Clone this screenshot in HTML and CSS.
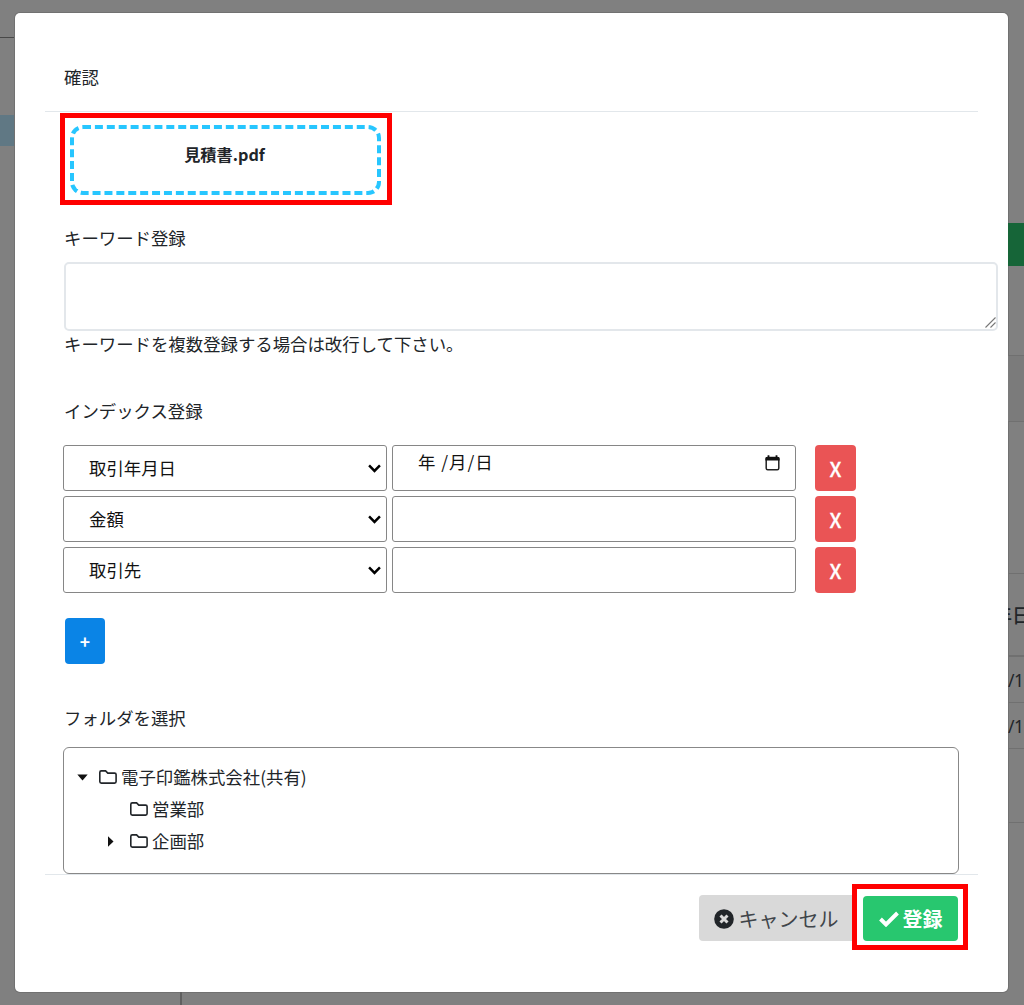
FILE: index.html
```
<!DOCTYPE html>
<html lang="ja">
<head>
<meta charset="utf-8">
<title>確認</title>
<link rel="stylesheet" href="styles.css">
</head>
<body>
<div class="page">
  <aside class="side-left"><div class="left-head"></div><div class="left-active"></div></aside>
  <main class="modal">
    <header class="modal-header">確認</header>
    <section class="modal-body">
      <div class="highlight file-highlight"><div class="file-name">見積書.pdf</div></div>
      <label class="label keyword-label">キーワード登録</label>
      <div class="textarea">
        <svg width="13" height="13" viewBox="0 0 13 13"><path d="M1.5 11.5 11.5 1.5M6.5 11.5l5-5" stroke="#777" stroke-width="1.1" fill="none"/></svg>
      </div>
      <p class="label help">キーワードを複数登録する場合は改行して下さい。</p>
      <div class="label index-label">インデックス登録</div>
      <div class="rows">
        <div class="row">
          <div class="select"><span>取引年月日</span><svg class="chev" viewBox="0 0 12 8"><path d="M1 1.2 6 6.2 11 1.2"/></svg></div>
          <div class="input"><span class="date">年 /月/日</span><svg class="cal" viewBox="0 0 15 16"><rect x="1.2" y="2.5" width="12.6" height="12.3" rx="1.5"/><path class="fill" d="M2.6.3h1.8V2h6.2V.3h1.8V2h.8q1.4 0 1.4 1.4V5.5H.4V3.4Q.4 2 1.8 2h.8z"/></svg></div>
          <button class="btn del">X</button>
        </div>
        <div class="row">
          <div class="select"><span>金額</span><svg class="chev" viewBox="0 0 12 8"><path d="M1 1.2 6 6.2 11 1.2"/></svg></div>
          <div class="input"></div>
          <button class="btn del">X</button>
        </div>
        <div class="row">
          <div class="select"><span>取引先</span><svg class="chev" viewBox="0 0 12 8"><path d="M1 1.2 6 6.2 11 1.2"/></svg></div>
          <div class="input"></div>
          <button class="btn del">X</button>
        </div>
      </div>
      <button class="btn add">+</button>
      <div class="label folder-label">フォルダを選択</div>
      <div class="tree">
        <div class="node"><svg class="arrow" viewBox="0 0 11 11"><path d="M.3 2.5h10.4L5.5 8.5z"/></svg><svg class="folder" viewBox="0 0 18 14"><path d="M2.3.9h4.3l2.2 2.2h6.8q1.5 0 1.5 1.5v7q0 1.5-1.5 1.5H2.3Q.8 13.1.8 11.6V2.4Q.8.9 2.3.9z"/></svg><span>電子印鑑株式会社(共有)</span></div>
        <div class="node child"><span class="arrow"></span><svg class="folder" viewBox="0 0 18 14"><path d="M2.3.9h4.3l2.2 2.2h6.8q1.5 0 1.5 1.5v7q0 1.5-1.5 1.5H2.3Q.8 13.1.8 11.6V2.4Q.8.9 2.3.9z"/></svg><span>営業部</span></div>
        <div class="node child"><svg class="arrow" viewBox="0 0 11 11"><path d="M3 .3v10.4L8.5 5.5z"/></svg><svg class="folder" viewBox="0 0 18 14"><path d="M2.3.9h4.3l2.2 2.2h6.8q1.5 0 1.5 1.5v7q0 1.5-1.5 1.5H2.3Q.8 13.1.8 11.6V2.4Q.8.9 2.3.9z"/></svg><span>企画部</span></div>
      </div>
    </section>
    <footer class="modal-footer">
      <button class="btn cancel"><svg width="20" height="20" viewBox="0 0 20 20"><circle cx="10" cy="10" r="9.8" fill="#212529"/><path d="m6.5 6.5 7 7m0-7-7 7" stroke="#d9d9d9" stroke-width="3"/></svg><span>キャンセル</span></button>
      <div class="highlight ok-highlight"><button class="btn ok"><svg width="20" height="16" viewBox="0 0 20 16"><path d="m1.5 8 5.5 5.5L18.5 2" fill="none" stroke="#fff" stroke-width="3.9"/></svg><span>登録</span></button></div>
    </footer>
  </main>
  <aside class="side-right">
    <div class="r-top"></div><div class="r-green"></div><div class="r-gap"></div><div class="r-band"></div><div class="r-space"></div>
    <div class="r-cell r-th"><span>年日</span></div><div class="r-cell"><span>/1</span></div><div class="r-cell"><span>/1</span></div><div class="r-last"></div>
  </aside>
  <div class="below"></div>
</div>
</body>
</html>
```
FILE: styles.css
```
* { box-sizing: border-box; }
body { margin: 0; background: #808080; color: #212529; font: 17.4px/26px "Noto Sans CJK JP", sans-serif; }
.page { display: grid; grid-template-columns: 15px 993px 16px; grid-template-rows: 992px 13px; height: 1005px; overflow: hidden; }
.below { grid-column: 2; width: 167px; border-right: 2px solid #606060; }
.side-left { padding-top: 37px; }
.left-head { height: 78px; border-top: 1px solid #484848; }
.left-active { height: 31px; background: #607884; }
.side-right { overflow: hidden; }
.r-top { height: 223px; }
.r-green { height: 43px; background: #166538; }
.r-gap { height: 89px; }
.r-band { height: 67px; background: #7b7b7b; border: solid #707070; border-width: 1px 0; }
.r-space { height: 151px; }
.r-cell { height: 46px; border-top: 1px solid #707070; display: flex; align-items: center; font: 17.5px/26px "Noto Sans", "Noto Sans CJK JP", sans-serif; letter-spacing: -.5px; }
.r-th { height: 83px; border-bottom: 1px solid #707070; padding: 3px 0 0; font-weight: 500; font-size: 19px; letter-spacing: 0; }
.r-th span { margin-left: -15px; white-space: nowrap; }
.r-last { height: 75px; border: solid #707070; border-width: 1px 0; }
.modal { margin-top: 13px; background: #fff; border-radius: 5px; padding: 0 30px; box-shadow: 0 0 0 1px #717171; display: flex; flex-direction: column; }
.modal-header { height: 99px; flex: none; padding: 51px 20px 0 19px; border-bottom: 1px solid #e2e7eb; }
.modal-body { height: 762px; flex: none; padding-left: 19px; display: flex; flex-direction: column; align-items: flex-start; }
.modal-body > * { flex: none; }
.highlight { border: 5px solid #f00; }
.file-highlight { width: 332px; height: 92px; margin: 1px 0 0 -4px; padding: 7px 6px 5px 5px; }
.file-name { height: 70px; border: 4px dashed #27c6ff; border-radius: 13px; padding-right: 2px; text-align: center; font-weight: 700; font-size: 16.2px; line-height: 51px; }
.label { margin: 0; height: 26px; white-space: nowrap; }
.keyword-label { margin-top: 20px; }
.textarea { width: 934px; height: 69px; margin: 11px 0 0 0; border: 2px solid #e3e7eb; border-radius: 5px; display: flex; align-items: flex-end; justify-content: flex-end; }
.textarea svg { display: block; margin-right: -1px; }
.help { margin-top: 0; }
.index-label { margin-top: 41px; }
.rows { margin: 21px 0 0 -1px; display: grid; gap: 5px; }
.row { display: flex; height: 46px; }
.select, .input { border: 1px solid #868686; border-radius: 3px; display: flex; justify-content: space-between; color: #111; }
.select { width: 324px; margin-right: 5px; padding: 0 5px 0 25px; align-items: center; }
.input { width: 404px; padding: 3px 15px 0 25px; align-items: flex-start; }
.date { letter-spacing: 1px; }
.chev { width: 13px; height: 9px; fill: none; stroke: #000; stroke-width: 2.3; }
.cal { width: 15px; height: 16px; margin-top: 6px; fill: none; stroke: #222; stroke-width: 1.5; }
.cal .fill { fill: #111; stroke: none; }
.btn { border: 0; border-radius: 4px; padding: 0; margin: 0; color: #fff; font: inherit; display: flex; align-items: center; justify-content: center; }
.del { width: 41px; margin-left: 19px; background: #ea5455; font-weight: 500; font-size: 20px; -webkit-text-stroke: .3px #fff; padding-top: 1px; }
.add { width: 40px; height: 46px; margin: 25px 0 0 1px; background: #0a84e6; padding-top: 2px; font-weight: 700; }
.folder-label { margin-top: 41px; }
.tree { width: 896px; height: 127px; margin: 16px 0 0 -1px; border: 1px solid #888; border-radius: 6px; padding: 13px 13px; }
.node { height: 32px; display: flex; align-items: center; }
.child { padding-left: 30px; }
.arrow { width: 11px; height: 11px; margin-right: 11px; fill: #111; }
.child .arrow { margin-left: -2px; margin-right: 14px; }
.folder { width: 18px; height: 14px; margin-right: 4px; fill: none; stroke: #212529; stroke-width: 1.6; }
.modal-footer { flex: none; border-top: 1px solid #e2e7eb; display: flex; justify-content: flex-end; align-items: flex-start; padding: 9px 10px 0 0; font-size: 20px; }
.cancel { width: 154px; height: 46px; margin-top: 11px; padding-top: 1px; background: #d9d9d9; color: #40454a; gap: 5px; border-radius: 4px 0 0 4px; }
.ok-highlight { width: 116px; height: 66px; padding: 7px 5px 6px 6px; margin-left: -1px; }
.ok { width: 95px; height: 45px; background: #28c76f; padding-top: 1px; gap: 4px; font-weight: 700; }
```
